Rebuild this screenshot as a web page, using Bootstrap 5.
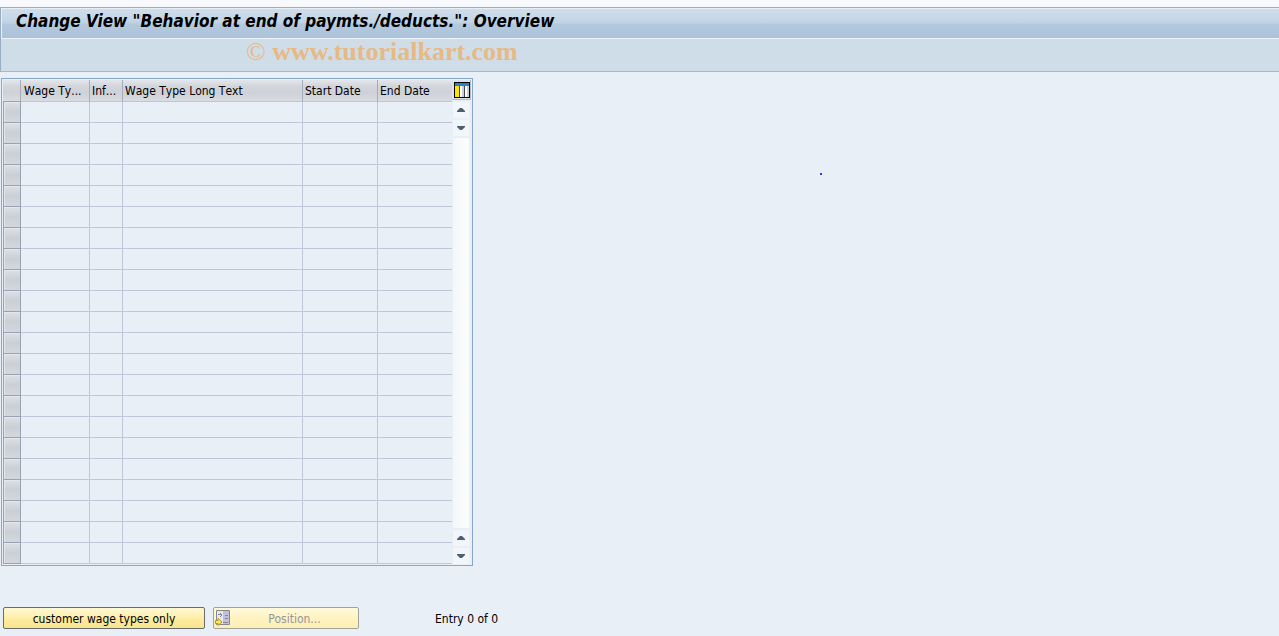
<!DOCTYPE html>
<html lang="en">
<head>
<meta charset="utf-8">
<meta name="viewport" content="width=device-width, initial-scale=1">
<title>Change View: Overview</title>
<link href="https://cdn.jsdelivr.net/npm/bootstrap@5.3.0/dist/css/bootstrap.min.css" rel="stylesheet">
<style>
body{background:#e8eff6;color:#000;font-family:"DejaVu Sans Condensed","DejaVu Sans",sans-serif;font-size:12px;line-height:16px;font-kerning:none}
.top-strip{height:7px;background:#f8f9fd}
.app-head{border-top:1px solid #97aec4;border-left:1px solid #97aec4;border-bottom:1px solid #a3b8cb}
.title-bar{height:31px;padding:0 14px;border-top:1px solid #e6eef6;border-bottom:1px solid #eef4f9;border-left:1px solid #e6eef6;background:linear-gradient(#d0deeb,#c2d4e5 45%,#b2c8dd 55%,#abc3da)}
.title-bar h1{font-size:17px;line-height:24px;font-weight:700;font-style:italic;font-kerning:normal}
.tool-bar{height:32px;background:#cfdde8;padding-left:245px}
.watermark{font-family:"Liberation Serif",serif;font-size:26px;line-height:26px;color:#e6b985;white-space:pre;font-kerning:normal}
.grid-frame{margin:6px 0 0 1px;border:1px solid #86a9cb;padding:1px;width:472px}
.wage-grid{width:449px;table-layout:fixed;border-collapse:separate;border-spacing:0}
.wage-grid th{height:22px;padding:2px 0 0 2px;font-weight:400;line-height:19px;vertical-align:middle;white-space:nowrap;overflow:hidden;background:linear-gradient(#e3e6ea,#d2d6db 30%,#ced2d8 60%,#d9dde2);border-right:1px solid #a4aeba;border-bottom:1px solid #bcc5d1}
.wage-grid th:last-child{border-right:0}
.wage-grid th:nth-child(2){padding-left:3px}
.wage-grid td{height:21px;padding:0;border-right:1px solid #bfc8d8;border-bottom:1px solid #bfc8d8}
.wage-grid td:last-child{border-right:0}
.wage-grid th:first-child{border-bottom:1px solid #98a3b1}
.wage-grid td:first-child{border-left:1px solid #98a3b1;border-right-color:#98a3b1;border-bottom-color:#98a3b1;box-shadow:inset 1px 1px #e4e8ec;background:linear-gradient(#dde0e4,#cacfd6 50%,#d4d8dd)}
.c-sel{width:18px}.c-type{width:69px}.c-inf{width:33px}.c-text{width:180px}.c-date{width:75px}.c-end{width:74px}
.scroll-col{width:19px}
.scroll-col button{display:flex;align-items:center;justify-content:center;padding:0;border:0}
.scroll-col .cfg-btn{width:19px;height:20px;padding-left:1px;background:#dfe4ea;border-right:1px solid #b5bcc6;border-bottom:1px solid #b5bcc6}
.scroll-col .arrow-btn{width:16px;height:16px;margin:2px 0 0 1px;background:#f2f6fb}
.scroll-track{width:16px;margin:2px 0 0 1px;background:linear-gradient(90deg,#f4f7fa,#fdfdfe)}
.stray-dot{width:2px;height:2px;margin:101px 0 0 347px;background:#3333f0}
.foot{margin-top:41px;padding-left:3px}
.sap-btn{height:22px;border:1px solid #6b6b68;border-radius:2px;padding:1px 0 0;font-size:12px;line-height:16px;color:#000;background:linear-gradient(#fff9d4,#fff0ae 45%,#fdeb9b 60%,#f6e592)}
.btn-cust{width:202px}
.btn-pos{width:146px;margin-left:8px;padding:0 0 0 1px}
.sap-btn span{padding-top:1px}
.sap-btn:disabled{border-color:#a3a39e;color:#94959a;opacity:1;background:linear-gradient(#fffadc,#fff3c0 50%,#fbedb4)}
.entry{margin-left:76px;padding-top:2px}
</style>
</head>
<body>
<div class="top-strip"></div>
<header class="app-head">
  <div class="title-bar"><h1 class="m-0 text-nowrap">Change View "Behavior at end of paymts./deducts.": Overview</h1></div>
  <div class="tool-bar"><span class="watermark">© <b>www.tutorialkart.com</b></span></div>
</header>
<main>
  <div class="d-flex align-items-start">
    <div class="grid-frame d-flex flex-shrink-0">
      <table class="wage-grid">
        <colgroup><col class="c-sel"><col class="c-type"><col class="c-inf"><col class="c-text"><col class="c-date"><col class="c-end"></colgroup>
        <thead><tr><th></th><th>Wage Ty...</th><th>Inf...</th><th>Wage Type Long Text</th><th>Start Date</th><th>End Date</th></tr></thead>
        <tbody id="rows"></tbody>
      </table>
      <div class="scroll-col d-flex flex-column">
        <button class="cfg-btn" type="button" aria-label="Table settings">
          <svg width="16" height="16" viewBox="0 0 16 16" shape-rendering="crispEdges"><path fill="#000" d="M0 0h16v16H0z"/><path fill="#fff" d="M1 1h14v14H1z"/><path fill="#2f7fc4" d="M1 1h14v3H1z"/><path fill="#ffe500" d="M1 4h4v11H1z"/><path fill="#c9d0d8" d="M8 4h2v11H8zM13 4h2v11h-2z"/><path fill="#3d4550" d="M5 4h1v11H5zM10 4h1v11h-1z"/></svg>
        </button>
        <button class="arrow-btn" type="button" aria-label="Scroll up"><svg width="10" height="6" viewBox="0 0 10 6"><path fill="#4d606f" d="M1 5V4l3-3h2l3 3v1z"/></svg></button>
        <button class="arrow-btn" type="button" aria-label="Scroll down"><svg width="10" height="6" viewBox="0 0 10 6"><path fill="#4d606f" d="M1 1v1l3 3h2l3-3V1z"/></svg></button>
        <div class="scroll-track flex-grow-1"></div>
        <button class="arrow-btn" type="button" aria-label="Page up"><svg width="10" height="6" viewBox="0 0 10 6"><path fill="#4d606f" d="M1 5V4l3-3h2l3 3v1z"/></svg></button>
        <button class="arrow-btn" type="button" aria-label="Page down"><svg width="10" height="6" viewBox="0 0 10 6"><path fill="#4d606f" d="M1 1v1l3 3h2l3-3V1z"/></svg></button>
      </div>
    </div>
    <div class="stray-dot"></div>
  </div>
  <div class="foot d-flex align-items-center">
    <button class="sap-btn btn-cust" type="button">customer wage types only</button>
    <button class="sap-btn btn-pos d-flex align-items-center" type="button" disabled>
      <svg class="flex-shrink-0" width="16" height="16" viewBox="0 0 16 16"><path fill="#e6e8ec" stroke="#85878c" d="M1.500.500h13v14h-13z"/><path fill="#bfc0da" d="M8 1h6v13H8z"/><path stroke="#85878c" d="M10 5.500h3M10 8.500h3M8 12.500h5M3 4.500h3M5 3l2 2-2 2" fill="none"/><path fill="#ffe95c" stroke="#a9953c" d="M.5 10.500H3v-2l4 3.500-4 3.500v-2H.5z"/></svg>
      <span class="flex-grow-1">Position...</span>
    </button>
    <span class="entry">Entry 0 of 0</span>
  </div>
</main>
<script src="https://cdn.jsdelivr.net/npm/bootstrap@5.3.0/dist/js/bootstrap.bundle.min.js"></script>
<script>
document.getElementById('rows').innerHTML = ('<tr>' + '<td></td>'.repeat(6) + '</tr>').repeat(22);
</script>
</body>
</html>
